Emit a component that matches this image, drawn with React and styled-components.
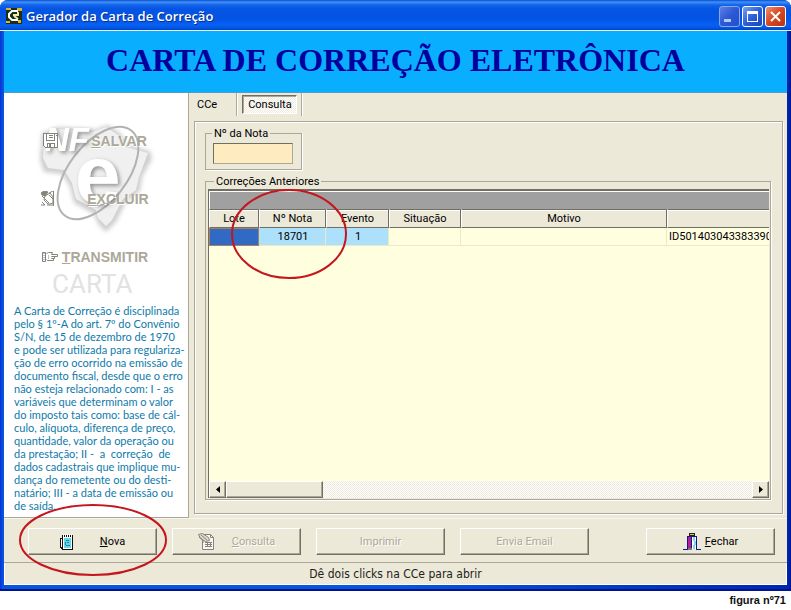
import React from "react";
import styled, { createGlobalStyle, css } from "styled-components";

const ui = 'Roboto, "Liberation Sans", sans-serif';
const arial = '"Liberation Sans", Arial, sans-serif';
const face = "#ece9d8";
const shade = "#aca899";
const dark = "#716f64";

const GlobalStyle = createGlobalStyle`
  *, *::before, *::after { box-sizing: border-box; }
  body { margin: 0; background: #fff; font-family: ${ui}; font-size: 11px; color: #000; }
  button, input { font: inherit; color: inherit; }
  button { padding: 0; border: 0; background: none; }
`;

const Window = styled.main`
  position: relative;
  display: flex;
  flex-direction: column;
  min-height: 590px;
  padding: 0 4px 4px;
  background: linear-gradient(90deg, #0831d9 0, #0855dd 3px, #0855dd 50%, #0026b0 calc(100% - 3px), #001590 100%);
  border-radius: 8px 8px 0 0;
  border-bottom: 2px solid #00138c;
  overflow: hidden;
`;

const TitleBar = styled.header`
  display: flex;
  align-items: center;
  gap: 4px;
  height: 31px;
  margin: 0 -4px;
  padding: 2px 5px 0 6px;
  border-bottom: 1px solid #e8f0fa;
  background: linear-gradient(#0b4bd0 0, #3f92f8 2px, #1263ea 5px, #0555e4 9px, #0453e2 18px, #0660f5 25px, #0456e0 28px, #0340c4 30px);
`;

const Title = styled.h1`
  flex: 1;
  margin: 0;
  font: 600 13px/18px "Open Sans", "Noto Sans", sans-serif;
  color: #fff;
  text-shadow: 1px 1px 0 #0a2f8c;
`;

const WindowButtons = styled.div`
  display: flex;
  gap: 2px;
`;

const WindowButton = styled.button`
  display: flex;
  width: 21px;
  height: 21px;
  border: 1px solid ${(p) => (p.$dim ? "#8aa5ea" : "#fff")};
  border-radius: 3px;
  background: ${(p) =>
    p.$close
      ? "linear-gradient(135deg, #eb9377, #da4a24 45%, #b8320f)"
      : p.$dim
        ? "linear-gradient(135deg, #5c82e4, #2c58d2 50%, #2350cc)"
        : "linear-gradient(135deg, #7ba2f2, #2b5fda 50%, #1a45b8)"};
`;

const Banner = styled.h2`
  margin: 0;
  height: 62px;
  border-bottom: 1px solid #4e9fc8;
  background: #0aaeff;
  color: #00009c;
  text-align: center;
  font: bold 32px/58px "Liberation Serif", "Times New Roman", serif;
`;

const Body = styled.div`
  display: flex;
  flex: 1;
  background: ${face};
`;

const Sidebar = styled.aside`
  position: relative;
  flex: 0 0 185px;
  min-width: 0;
  padding: 40px 0 5px;
  background: #fff;
  border-right: 1px solid ${shade};
  border-bottom: 1px solid ${shade};
`;

const Watermark = styled.svg`
  position: absolute;
  left: 0;
  top: 0;
`;

const Actions = styled.nav`
  position: relative;
  display: flex;
  flex-direction: column;
  align-items: center;
  gap: 42px;
  padding-right: 2px;
`;

const Action = styled.button`
  display: flex;
  align-items: center;
  gap: ${(p) => (p.$tight ? "3px" : "32px")};
  height: 16px;
  color: ${shade};
  font-family: ${arial};
  font-size: 14px;
  font-weight: bold;
  text-shadow: 1px 1px 0 #fff;
`;

const Law = styled.p`
  position: relative;
  margin: 39px 0 0 10px;
  font-family: Lato, ${ui};
  line-height: 13px;
  white-space: pre;
  color: #0e7aaa;
`;

const Content = styled.section`
  flex: 1;
  min-width: 0;
  display: flex;
  flex-direction: column;
  padding: 0 4px 4px 5px;
`;

const Tabs = styled.div`
  display: flex;
  height: 23px;
`;

const Tab = styled.div`
  display: flex;
  padding: 2px 4px 2px 2px;
  border-right: 1px solid ${shade};
  box-shadow: 1px 0 0 #fff;
  & + & { padding-left: 5px; }
`;

const dither = css`
  background: repeating-conic-gradient(#fff 0 25%, #eeebde 0 50%) 0 0 / 2px 2px;
`;

const TabButton = styled.button`
  height: 19px;
  padding: 0 15px 0 1px;
  ${(p) =>
    p.$active &&
    css`
      ${dither}
      padding: 0 4px 0 5px;
      border: 1px solid;
      border-color: ${dark} #fff #fff ${dark};
      box-shadow: inset 1px 1px 0 ${shade};
    `}
`;

const Panel = styled.div`
  flex: 1;
  display: flex;
  flex-direction: column;
  align-items: flex-start;
  margin-top: 5px;
  padding: 5px 11px 13px 10px;
  border: 1px solid ${shade};
  box-shadow: inset 1px 1px 0 #fff, 1px 1px 0 #fff;
`;

const Group = styled.fieldset`
  min-width: 0;
  margin: 0;
  padding: ${(p) => (p.$wide ? "1px 1px 1px 2px" : "3px 8px 5px 7px")};
  border: 1px solid ${shade};
  box-shadow: 1px 1px 0 #fff;
  ${(p) =>
    p.$wide &&
    css`
      align-self: stretch;
      flex: 1;
      margin-top: 5px;
    `}
`;

const Legend = styled.legend`
  margin-left: ${(p) => (p.$indent ? "6px" : "-1px")};
  padding: 0 2px;
  line-height: 13px;
`;

const NoteInput = styled.input`
  display: block;
  width: 80px;
  height: 21px;
  padding: 0 4px;
  border: 1px solid;
  border-color: ${dark} ${shade} ${shade} ${dark};
  border-radius: 0;
  background: #ffebc0;
  outline: none;
`;

const Grid = styled.div`
  display: flex;
  flex-direction: column;
  height: 100%;
  min-height: 308px;
  border-top: 2px solid ${dark};
  border-left: 1px solid ${dark};
  background: #ffffdf;
`;

const GroupBar = styled.div`
  height: 18px;
  border-top: 1px solid #fff;
  border-left: 1px solid #fff;
  background: #a0a0a0;
`;

const Table = styled.table`
  width: 100%;
  table-layout: fixed;
  border-collapse: separate;
  border-spacing: 0;
  text-align: center;
`;

const Col = styled.col`
  width: ${(p) => p.$w}px;
`;

const Th = styled.th`
  height: 19px;
  padding: 0;
  font-weight: normal;
  background: ${face};
  border: 1px solid ${dark};
  border-left-color: #fff;
  border-right-width: ${(p) => (p.$last ? "0" : "1px")};
  box-shadow: inset 0 1px 0 #fff;
`;

const Td = styled.td`
  height: 18px;
  padding: 0 0 0 2px;
  overflow: hidden;
  white-space: nowrap;
  border-right: 1px solid #ece9c8;
  border-bottom: 1px solid #ece9c8;
  ${(p) => p.$lit && "background: #ade0fb;"}
  ${(p) => p.$picked && "background: #316ac5; border: 1px solid #ad7f58;"}
  ${(p) => p.$left && "text-align: left; border-right: 0;"}
`;

const ScrollBar = styled.div`
  display: flex;
  margin-top: auto;
  height: 17px;
  ${dither}
`;

const raised = css`
  background: ${face};
  border: 1px solid;
  border-color: #fff ${dark} ${dark} #fff;
  box-shadow: inset -1px -1px 0 ${shade};
`;

const ScrollButton = styled.button`
  ${raised}
  display: flex;
  align-items: center;
  justify-content: center;
  width: 17px;
  margin-left: ${(p) => (p.$end ? "auto" : "0")};
`;

const Thumb = styled.div`
  ${raised}
  width: 97px;
`;

const Footer = styled.div`
  display: flex;
  gap: 15px;
  padding: 10px 12px 7px 24px;
  background: ${face};
  border-bottom: 1px solid ${shade};
  box-shadow: inset 0 1px 0 #f7f5ec;
`;

const FootButton = styled.button`
  ${raised}
  display: flex;
  align-items: center;
  justify-content: center;
  gap: ${(p) => p.$gap || 0}px;
  flex: 0 1 129px;
  height: 27px;
  &:last-child { margin-left: auto; }
  &:disabled {
    color: ${shade};
    text-shadow: 1px 1px 0 #fff;
  }
`;

const Status = styled.div`
  height: 22px;
  border: 1px solid #fff;
  border-top: 0;
  background: ${face};
  text-align: center;
  color: #222;
  font: 12px/22px "DejaVu Sans Condensed", "Noto Sans", sans-serif;
`;

const Marker = styled.svg`
  position: absolute;
  left: ${(p) => p.$x}px;
  top: ${(p) => p.$y}px;
  pointer-events: none;
  fill: none;
  stroke: #c4161c;
  stroke-width: 2;
`;

const Caption = styled.p`
  margin: 0;
  padding: 2px 5px 0 0;
  text-align: right;
  font-family: ${arial};
  font-size: 11px;
  line-height: 14px;
  font-weight: bold;
  color: #111;
`;

const AppIcon = () => (
  <svg width="16" height="16" viewBox="0 0 16 16">
    <path fill="#173016" d="M0 0h16v16H0z" />
    <path fill="#d9b43a" d="M0 0h5v2H0zM11 0h5v3h-5zM0 13h4v2H0zM12 12h3v3h-3z" />
    <path fill="none" stroke="#fff" strokeWidth="2" d="M12 3H6L3 6v3l3 3h6" />
    <path fill="none" stroke="#f1e5b0" strokeWidth="2" d="M7 7h5V4M8 8l4 3" />
  </svg>
);

const FloppyIcon = () => (
  <svg width="16" height="16" viewBox="0 0 16 16" fill="none" stroke="#85837a" shapeRendering="crispEdges">
    <path fill="#fff" d="M.5.5h14v14h-12l-2-2z" />
    <path d="M3.5.5v7h8v-7M5.5 2.5h4M5.5 4.5h4M4.5 14v-4h7v4M12.5 2.5h1" />
    <path fill="#85837a" d="M6.5 11.5h1v2h-1z" />
  </svg>
);

const EraseIcon = () => (
  <svg width="14" height="16" viewBox="0 0 14 16" fill="none" stroke="#85837a">
    <path fill="#fff" d="M4 5l5-3 3 4v6l-3 1H7L3 9z" />
    <path fill="#85837a" d="M0 2l3-2 4 1-3 4-3-1z" />
    <path d="M12.500 0v15M8 2l4-2M1 5l7 7M8 4l4 4M3 9l4 4M1 11l3 3H0M6 14h7" />
  </svg>
);

const PointIcon = () => (
  <svg width="17" height="12" viewBox="0 0 17 12" fill="#fff" stroke="#85837a">
    <path d="M.5 1.500h3v9h-3zM4.500 2.500l2-1h4l-1 2h6v2H9.500M9.500 5.500h3v2h-3M9.500 7.500h2v2h-6l-1-1" />
    <path d="M2 2v8M6 5h2M6 7h2" strokeDasharray="1 1" />
  </svg>
);

const NotebookIcon = () => (
  <svg width="14" height="16" viewBox="0 0 14 16" shapeRendering="crispEdges">
    <path fill="#111" d="M2 1h11v15H3l-3-2V4h2z" />
    <path fill="#fff" d="M1 5h1v8H1zM3 3h9v12H3z" />
    <path fill="#62d5e6" d="M4 4h7v10H4z" />
    <path fill="#fff" d="M3 0h1v3H3zM5 0h1v3H5zM7 0h1v3H7zM9 0h1v3H9zM11 0h1v3h-1z" />
    <path fill="#26849e" d="M6 6h3v1H6zM5 8h1v3H5zM7 8h2v1H7zM6 11h4v1H6z" />
  </svg>
);

const ConsultIcon = () => (
  <svg width="16" height="17" viewBox="0 0 16 17" fill="none" stroke="#85837a">
    <path fill="#f8f7f1" d="M4.500 1.500h8l3 3v12h-11z" />
    <path d="M12.500 1.500v3h3M7 9.500h7M7 11.500h7M7 13.500h7M9.500 9v5M12.500 9v5" />
    <path fill="#dedbca" d="M.5 1.500l4-1 6 4 1 3-4 1-5-3z" />
    <path d="M3 2l6 5M1 4l4 3v3" />
  </svg>
);

const DoorIcon = () => (
  <svg width="18" height="18" viewBox="0 0 18 18" shapeRendering="crispEdges">
    <path fill="#222" d="M6 0h6v3H6z" />
    <path fill="#c8c86a" d="M7 1h4v1H7z" />
    <path fill="#fff" d="M9 4h5v12H9z" />
    <path fill="#7bd7f0" d="M10 4h2v4h-2zM11 8h2v4h-2zM10 12h2v4h-2z" />
    <path fill="#b0209a" d="M5 4h4v12H5z" />
    <path fill="#17177f" d="M4 3h10v1H4zM4 3h1v13H4zM13 3h1v14h-1zM8 4h1v12H8zM0 16h6v1H0zM14 16h4v1h-4z" />
    <path fill="#777" d="M5 15h4v2H5z" />
  </svg>
);

const Arrow = ({ right }) => (
  <svg width="4" height="7" viewBox="0 0 4 7">
    <path d={right ? "M0 0l4 3.500L0 7z" : "M4 0L0 3.500 4 7z"} />
  </svg>
);

const NfeMark = () => (
  <Watermark width="184" height="215" viewBox="0 0 184 215" aria-hidden="true">
    <defs>
      <filter id="soft" x="-20%" y="-20%" width="140%" height="140%">
        <feGaussianBlur stdDeviation="2" />
      </filter>
      <filter id="drop" x="-20%" y="-20%" width="140%" height="140%">
        <feDropShadow dx="2" dy="2" stdDeviation="2" floodColor="#777" floodOpacity="0.8" />
      </filter>
    </defs>
    <path
      fill="#cfcfcf"
      filter="url(#soft)"
      d="M38 40l18-6 34 3 14-5 12 8 8 12 22 6 2 8-10 18-2 14-14 11-10 20-10 10-8-8-4-10-20-11-4-16-8-13-18-2-4-12z"
    />
    <path
      fill="#f0f0f0"
      d="M40 41l16-5 32 3 14-5 12 8 8 12 22 6-9 24-3 13-13 9-11 21-6 6-8-8-2-8-20-11-4-16-8-13-16-2-5-10z"
    />
    <ellipse cx="94" cy="80" rx="29" ry="54" transform="rotate(38 94 80)" fill="none" stroke="#b2b2b2" strokeWidth="2" />
    <text x="41" y="58" fill="#fff" filter="url(#drop)" fontFamily="Liberation Sans" fontWeight="bold" fontStyle="italic" fontSize="33">NF</text>
    <text x="71" y="110" fill="#fff" filter="url(#drop)" fontFamily="Liberation Sans" fontWeight="bold" fontSize="82">e</text>
    <text x="48" y="200" fill="#e2e2e2" fontFamily="Roboto" fontSize="26">CARTA</text>
  </Watermark>
);

const law = `A Carta de Correção é disciplinada
pelo § 1º-A do art. 7º do Convênio
S/N, de 15 de dezembro de 1970
e pode ser utilizada para regulariza-
ção de erro ocorrido na emissão de
documento fiscal, desde que o erro
não esteja relacionado com: I - as
variáveis que determinam o valor
do imposto tais como: base de cál-
culo, alíquota, diferença de preço,
quantidade, valor da operação ou
da prestação; II -  a  correção  de
dados cadastrais que implique mu-
dança do remetente ou do desti-
natário; III - a data de emissão ou
de saída.`;

export default function App() {
  return (
    <>
      <GlobalStyle />
      <Window>
        <TitleBar>
          <AppIcon />
          <Title>Gerador da Carta de Correção</Title>
          <WindowButtons>
            <WindowButton $dim aria-label="Minimizar">
              <svg width="19" height="19"><path fill="#b5c8f5" d="M4 12h7v3H4z" /></svg>
            </WindowButton>
            <WindowButton aria-label="Maximizar">
              <svg width="19" height="19"><path fill="#fff" fillRule="evenodd" d="M4 4h11v11H4zM5 7v7h9V7z" /></svg>
            </WindowButton>
            <WindowButton $close aria-label="Fechar janela">
              <svg width="19" height="19"><path stroke="#fff" strokeWidth="2" d="M5 5l9 9M14 5l-9 9" /></svg>
            </WindowButton>
          </WindowButtons>
        </TitleBar>
        <Banner>CARTA DE CORREÇÃO ELETRÔNICA</Banner>
        <Body>
          <Sidebar>
            <NfeMark />
            <Actions>
              <Action disabled><FloppyIcon /><span><u>S</u>ALVAR</span></Action>
              <Action disabled><EraseIcon /><span><u>E</u>XCLUIR</span></Action>
              <Action disabled $tight><PointIcon /><span><u>T</u>RANSMITIR</span></Action>
            </Actions>
            <Law>{law}</Law>
          </Sidebar>
          <Content>
            <Tabs role="tablist">
              <Tab role="presentation"><TabButton role="tab" aria-selected="false">CCe</TabButton></Tab>
              <Tab role="presentation"><TabButton role="tab" aria-selected="true" $active>Consulta</TabButton></Tab>
            </Tabs>
            <Panel role="tabpanel">
              <Group>
                <Legend><label htmlFor="nota">Nº da Nota</label></Legend>
                <NoteInput id="nota" />
              </Group>
              <Group $wide>
                <Legend $indent>Correções Anteriores</Legend>
                <Grid>
                  <GroupBar />
                  <Table>
                    <colgroup>
                      <Col $w={50} /><Col $w={67} /><Col $w={63} /><Col $w={72} /><Col $w={206} /><col />
                    </colgroup>
                    <thead>
                      <tr>
                        <Th>Lote</Th><Th>Nº Nota</Th><Th>Evento</Th><Th>Situação</Th><Th>Motivo</Th><Th $last />
                      </tr>
                    </thead>
                    <tbody>
                      <tr>
                        <Td $picked /><Td $lit>18701</Td><Td $lit>1</Td><Td /><Td /><Td $left>ID501403043383390</Td>
                      </tr>
                    </tbody>
                  </Table>
                  <ScrollBar>
                    <ScrollButton aria-label="Rolar para a esquerda"><Arrow /></ScrollButton>
                    <Thumb />
                    <ScrollButton $end aria-label="Rolar para a direita"><Arrow right /></ScrollButton>
                  </ScrollBar>
                </Grid>
              </Group>
            </Panel>
          </Content>
        </Body>
        <Footer>
          <FootButton $gap={26}><NotebookIcon /><span><u>N</u>ova</span></FootButton>
          <FootButton $gap={18} disabled><ConsultIcon /><span><u>C</u>onsulta</span></FootButton>
          <FootButton disabled>Imprimir</FootButton>
          <FootButton disabled>Envia Email</FootButton>
          <FootButton $gap={4}><DoorIcon /><span><u>F</u>echar</span></FootButton>
        </Footer>
        <Status role="status">Dê dois clicks na CCe para abrir</Status>
        <Marker $x={231} $y={188} width="117" height="93"><ellipse cx="58" cy="46" rx="57" ry="44" /></Marker>
        <Marker $x={19} $y={503} width="149" height="74"><ellipse cx="74" cy="37" rx="73" ry="35" /></Marker>
      </Window>
      <Caption>figura nº71</Caption>
    </>
  );
}
